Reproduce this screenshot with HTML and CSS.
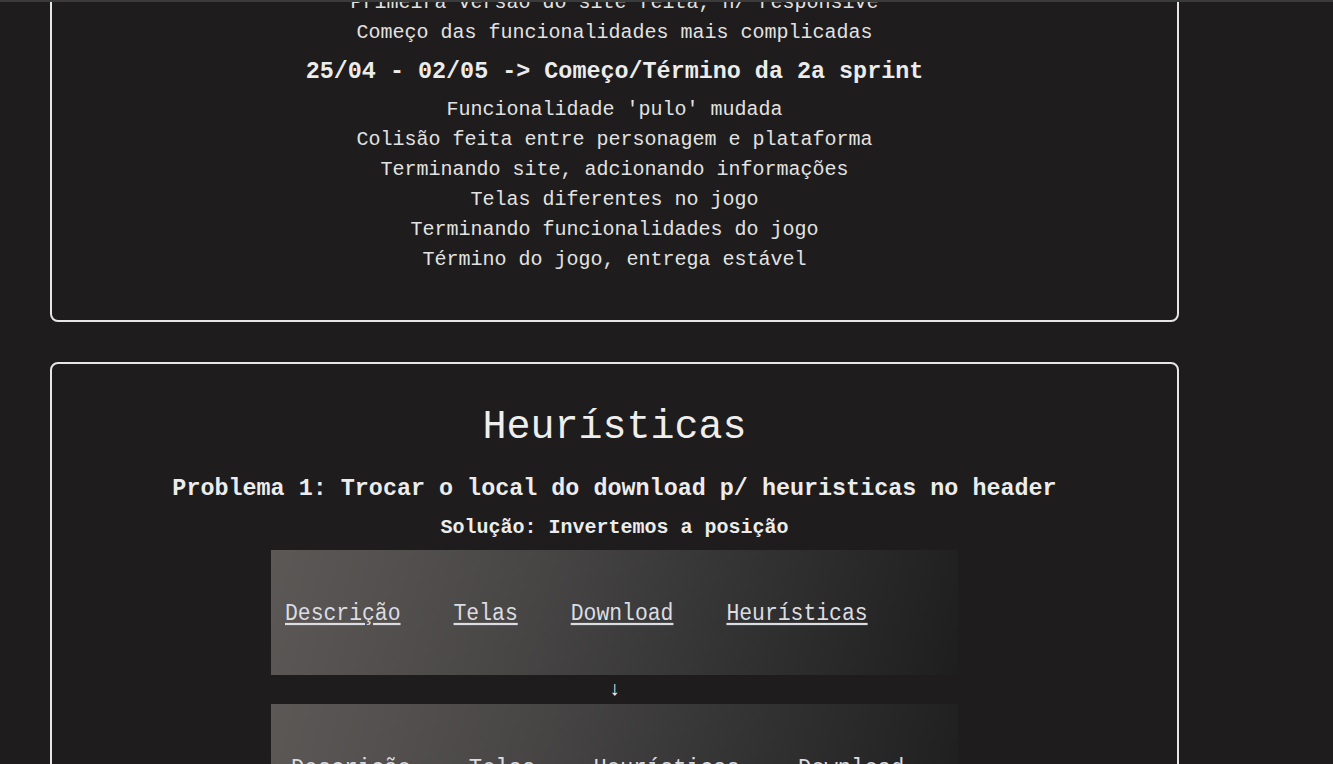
FILE: index.html
```html
<!DOCTYPE html>
<html lang="pt-BR">
<head>
<meta charset="utf-8">
<title>Heurísticas</title>
<link rel="stylesheet" href="styles.css">
</head>
<body>
<div class="topbar"></div>
<main class="page">
  <section class="card card-sprints">
    <p class="line">Primeira versão do site feita, n/ responsive</p>
    <p class="line">Começo das funcionalidades mais complicadas</p>
    <h3 class="sprint">25/04 - 02/05 -&gt; Começo/Término da 2a sprint</h3>
    <p class="line">Funcionalidade 'pulo' mudada</p>
    <p class="line">Colisão feita entre personagem e plataforma</p>
    <p class="line">Terminando site, adcionando informações</p>
    <p class="line">Telas diferentes no jogo</p>
    <p class="line">Terminando funcionalidades do jogo</p>
    <p class="line">Término do jogo, entrega estável</p>
  </section>

  <section class="card card-heuristics">
    <h1 class="title">Heurísticas</h1>
    <h3 class="problem">Problema 1: Trocar o local do download p/ heuristicas no header</h3>
    <h4 class="solution">Solução: Invertemos a posição</h4>
    <div class="shot shot-a">
      <nav class="shot-nav">
        <a href="#">Descrição</a>
        <a href="#">Telas</a>
        <a href="#">Download</a>
        <a href="#">Heurísticas</a>
      </nav>
    </div>
    <div class="arrow">↓</div>
    <div class="shot shot-b">
      <nav class="shot-nav">
        <a href="#">Descrição</a>
        <a href="#">Telas</a>
        <a href="#">Heurísticas</a>
        <a href="#">Download</a>
      </nav>
    </div>
  </section>
</main>
</body>
</html>
```

FILE: styles.css
```css
html, body {
  margin: 0;
  padding: 0;
  background: #1e1c1d;
  overflow: hidden;
}

body {
  font-family: "Liberation Mono", "DejaVu Sans Mono", monospace;
  font-size: 20px;
  color: #e2e2e2;
}

.topbar {
  position: fixed;
  top: 0;
  left: 0;
  right: 0;
  height: 2px;
  background: #3b3b3b;
  z-index: 5;
}

.page {
  padding-left: 50px;
}

.card {
  box-sizing: border-box;
  width: 1129px;
  border: 2px solid #e6e6e6;
  border-radius: 8px;
  text-align: center;
}

.card-sprints {
  margin-top: -14px;
  padding-bottom: 45px;
}

.line {
  margin: 0;
  line-height: 30px;
}

.sprint {
  margin: 8px 0 7px;
  font-size: 23.4px;
  line-height: 32px;
  font-weight: bold;
  color: #ececec;
}

.card-heuristics {
  margin-top: 40px;
  padding-top: 41px;
  padding-bottom: 40px;
}

.title {
  margin: 0;
  font-size: 40px;
  line-height: 46px;
  font-weight: normal;
  color: #eeeeee;
}

.problem {
  margin: 23px 0 0;
  font-size: 23.4px;
  line-height: 30px;
  font-weight: bold;
  color: #ececec;
}

.solution {
  margin: 12px 0 0;
  font-size: 20px;
  line-height: 24px;
  font-weight: bold;
  color: #ececec;
}

.shot {
  width: 687px;
  margin: 10px auto 0;
  background: linear-gradient(105deg, #5c5856 0%, #4b4948 32%, #373637 62%, #1f1e1f 100%);
  display: flex;
  align-items: center;
}

.shot-a {
  height: 125px;
}

.shot-b {
  margin-top: 0;
  height: 129px;
}

.shot-nav {
  display: flex;
  transform: scaleY(1.1);
}

.shot-a .shot-nav {
  padding-left: 14px;
  gap: 53px;
  font-size: 21.4px;
}

.shot-b .shot-nav {
  padding-left: 20px;
  gap: 58px;
  font-size: 22.2px;
}

.shot-nav a {
  color: #dcdde2;
  text-decoration: underline;
  text-underline-offset: 3px;
}

.arrow {
  height: 29px;
  line-height: 29px;
  font-size: 20px;
  font-weight: bold;
  color: #eeeeee;
}
```
